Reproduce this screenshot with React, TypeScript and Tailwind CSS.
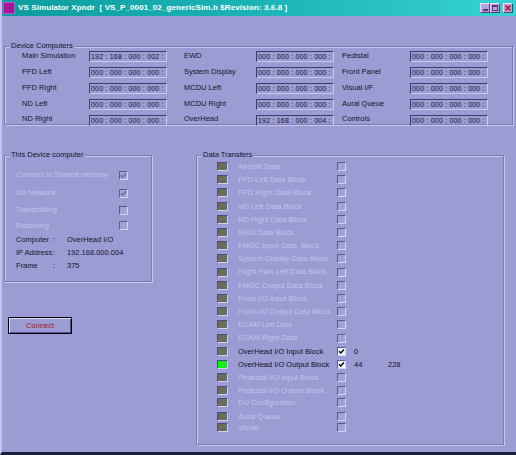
import React from 'react';

const FONT = "font-['Liberation_Sans',Arial,sans-serif]";

const devices: [string, string, string, string, string, string][] = [
    ['Main Simulation', '192 : 168 : 000 : 002 :', 'EWD', '000 : 000 : 000 : 000 :', 'Pedistal', '000 : 000 : 000 : 000 :'],
    ['PFD Left', '000 : 000 : 000 : 000 :', 'System Display', '000 : 000 : 000 : 000 :', 'Front Panel', '000 : 000 : 000 : 000 :'],
    ['PFD Right', '000 : 000 : 000 : 000 :', 'MCDU Left', '000 : 000 : 000 : 000 :', 'Visual I/F', '000 : 000 : 000 : 000 :'],
    ['ND Left', '000 : 000 : 000 : 000 :', 'MCDU Right', '000 : 000 : 000 : 000 :', 'Aural Queue', '000 : 000 : 000 : 000 :'],
    ['ND Right', '000 : 000 : 000 : 000 :', 'OverHead', '192 : 168 : 000 : 004 :', 'Controls', '000 : 000 : 000 : 000 :'],
];

type Transfer = { name: string; on?: boolean; lit?: boolean; a?: string; b?: string; h: string };

const transfers: Transfer[] = [
    { name: 'Aircraft Data', h: 'h-[13.2px]' },
    { name: 'PFD Left Data Block', h: 'h-[13.2px]' },
    { name: 'PFD Right Data Block', h: 'h-[13.2px]' },
    { name: 'ND Left Data Block', h: 'h-[13.2px]' },
    { name: 'ND Right Data Block', h: 'h-[13.2px]' },
    { name: 'EWD Data Block', h: 'h-[13.2px]' },
    { name: 'FMGC Input Data  Block', h: 'h-[13.2px]' },
    { name: 'System Display Data Block', h: 'h-[13.2px]' },
    { name: 'Flight Plan Left Data Block', h: 'h-[13.2px]' },
    { name: 'FMGC Output Data Block', h: 'h-[13.2px]' },
    { name: 'Front I/O Input Block', h: 'h-[13.2px]' },
    { name: 'Front I/O Output Data Block', h: 'h-[13.2px]' },
    { name: 'ECAM Left Data', h: 'h-[13.2px]' },
    { name: 'ECAM Right Data', h: 'h-[13.2px]' },
    { name: 'OverHead I/O Input Block', on: true, a: '0', h: 'h-[13.2px]' },
    { name: 'OverHead I/O Output Block', on: true, lit: true, a: '44', b: '228', h: 'h-[13.2px]' },
    { name: 'Pedestal I/O Input Block', h: 'h-[13.2px]' },
    { name: 'Pedestal I/O Output Block', h: 'h-[13.2px]' },
    { name: 'DU Configuration', h: 'h-[11px]' },
    { name: 'Aural Queue', h: 'h-[11px] mt-[3px]' },
    { name: 'Visual', h: 'h-[10px]' },
];

// disabled (greyed) label colour
const DIS = 'text-[#c2c2ee]';

const Check = ({ checked, enabled }: { checked?: boolean; enabled?: boolean }) => (
    <div className={`w-[9px] h-[9px] border-t border-l border-t-[#5a5a90] border-l-[#5a5a90] border-b border-r border-b-[#d4d4f4] border-r-[#d4d4f4] flex items-center justify-center ${enabled ? 'bg-[#f4f4ff]' : 'bg-[#a2a2d8]'}`}>
        {checked && (
            <svg width="7" height="7" viewBox="0 0 7 7">
                <path d="M1 3.2 L2.8 5 L6 1.5" fill="none" stroke={enabled ? '#000' : '#6a6aa0'} strokeWidth="1.4" />
            </svg>
        )}
    </div>
);

const Group = ({ title, className, children }: { title: string; className: string; children: React.ReactNode }) => (
    <div className={`relative border border-[#7a7ab4] shadow-[inset_1px_1px_0_#c6c6ee,1px_1px_0_#c6c6ee] ${className}`}>
        <span className="absolute -top-[6px] left-[5px] px-[1px] bg-[#9c9cd4] text-[7.5px] leading-[10px] text-[#12122e]">{title}</span>
        {children}
    </div>
);

const App: React.FC = () => {
    return (
        <div className={`w-[516px] h-[455px] bg-[#9c9cd4] flex flex-col border-l-2 border-l-[#c4c4ec] border-b-[3px] border-b-[#1c1c3c] overflow-hidden ${FONT}`}>
            {/* title bar */}
            <div className="h-[16px] shrink-0 flex items-center bg-gradient-to-r from-[#0c9c9e] via-[#1cb4b6] to-[#36d2d2] pl-[1px] pr-[3px]">
                <div className="w-[12px] h-[12px] bg-[#a01898] border border-[#d050c8]" />
                <span className="ml-[3px] text-white font-bold text-[8px] leading-none whitespace-pre tracking-[0.1px]">
                    VS Simulator Xpndr  [ VS_P_0001_02_genericSim.h $Revision: 3.6.8 ]
                </span>
                <div className="ml-auto flex items-center">
                    <div className="w-[10px] h-[10px] bg-[#b4a8d8] border border-[#e8e0f8] border-b-[#504070] border-r-[#504070] flex items-end justify-center pb-[1px]">
                        <div className="w-[5px] h-[2px] bg-[#6a2a8a]" />
                    </div>
                    <div className="w-[10px] h-[10px] bg-[#b4a8d8] border border-[#e8e0f8] border-b-[#504070] border-r-[#504070] flex items-center justify-center">
                        <div className="w-[6px] h-[6px] border border-t-2 border-[#6a2a8a]" />
                    </div>
                    <div className="ml-[3px] w-[10px] h-[10px] bg-[#b4a8d8] border border-[#e8e0f8] border-b-[#504070] border-r-[#504070] flex items-center justify-center">
                        <svg width="6" height="6" viewBox="0 0 6 6">
                            <path d="M0.5 0.5 L5.5 5.5 M5.5 0.5 L0.5 5.5" stroke="#c01830" strokeWidth="1.6" />
                        </svg>
                    </div>
                </div>
            </div>

            {/* device computers */}
            <Group title="Device Computers" className="mt-[30px] ml-[2px] mr-[3px] h-[79px] pt-[2px] pl-[17px]">
                {devices.map((r, i) => (
                    <div key={i} className="grid grid-cols-[67px_95px_72px_86px_68px_78px] items-center h-[15.8px] text-[7.5px] text-[#14142e]">
                        {[0, 2, 4].map(c => (
                            <React.Fragment key={c}>
                                <span className="-translate-y-[1px]">{r[c]}</span>
                                <div className="w-[78px] h-[11px] border-t border-l border-t-[#3c3c70] border-l-[#3c3c70] border-b border-r border-b-[#cacaf0] border-r-[#cacaf0] flex items-center pl-[1px] text-[7px] leading-none tracking-[0.2px] text-[#14142e] overflow-hidden whitespace-pre">
                                    {r[c + 1]}
                                </div>
                            </React.Fragment>
                        ))}
                    </div>
                ))}
            </Group>

            <div className="flex mt-[30px]">
                {/* left column */}
                <div className="flex flex-col w-[148px] ml-[2px]">
                    <Group title="This Device computer" className="h-[127px] pt-[10px] pl-[11px] text-[7.5px]">
                        <div className={`grid grid-cols-[103px_9px] items-center h-[18px] ${DIS}`}>
                            <span>Connect to Shared memory</span>
                            <Check checked />
                        </div>
                        <div className={`grid grid-cols-[103px_9px] items-center h-[18px] ${DIS}`}>
                            <span>On Network</span>
                            <Check checked />
                        </div>
                        <div className={`grid grid-cols-[103px_9px] items-center h-[16px] ${DIS}`}>
                            <span>Transmitting</span>
                            <Check />
                        </div>
                        <div className={`grid grid-cols-[103px_9px] items-center h-[15px] ${DIS}`}>
                            <span>Receiving</span>
                            <Check />
                        </div>
                        {[
                            ['Computer', 'OverHead I/O'],
                            ['IP Address', '192.168.000.004'],
                            ['Frame', '375'],
                        ].map(([k, v]) => (
                            <div key={k} className="grid grid-cols-[37px_14px_1fr] items-center h-[13px] text-[#14142e]">
                                <span>{k}</span>
                                <span>:</span>
                                <span>{v}</span>
                            </div>
                        ))}
                    </Group>
                    <button className="mt-[35px] ml-[4px] w-[64px] h-[17px] border border-black bg-[#9c9cd4] shadow-[inset_1px_1px_0_#d8d8f6,inset_-1px_-1px_0_#50508a] text-[7.5px] text-[#a0141c] flex items-center justify-center">
                        Connect
                    </button>
                </div>

                {/* data transfers */}
                <Group title="Data Transfers" className="ml-[44px] w-[308px] h-[290px] pt-[4px] pl-[20px] text-[7.5px]">
                    {transfers.map(t => (
                        <div key={t.name} className={`flex items-center ${t.h}`}>
                            <div className={`w-[11px] h-[9px] border-t border-l border-t-[#4c4c7c] border-l-[#4c4c7c] border-b border-r border-b-[#d0d0f2] border-r-[#d0d0f2] ${t.lit ? 'bg-[#14ee14]' : 'bg-[#6c6c5e]'}`} />
                            <span className={`ml-[10px] w-[99px] whitespace-pre ${t.on ? 'text-[#101028]' : DIS}`}>{t.name}</span>
                            <Check checked={t.on} enabled={t.on} />
                            <span className="ml-[8px] w-[34px] text-[#101028]">{t.a}</span>
                            <span className="text-[#101028]">{t.b}</span>
                        </div>
                    ))}
                </Group>
            </div>
        </div>
    );
};

export default App;
